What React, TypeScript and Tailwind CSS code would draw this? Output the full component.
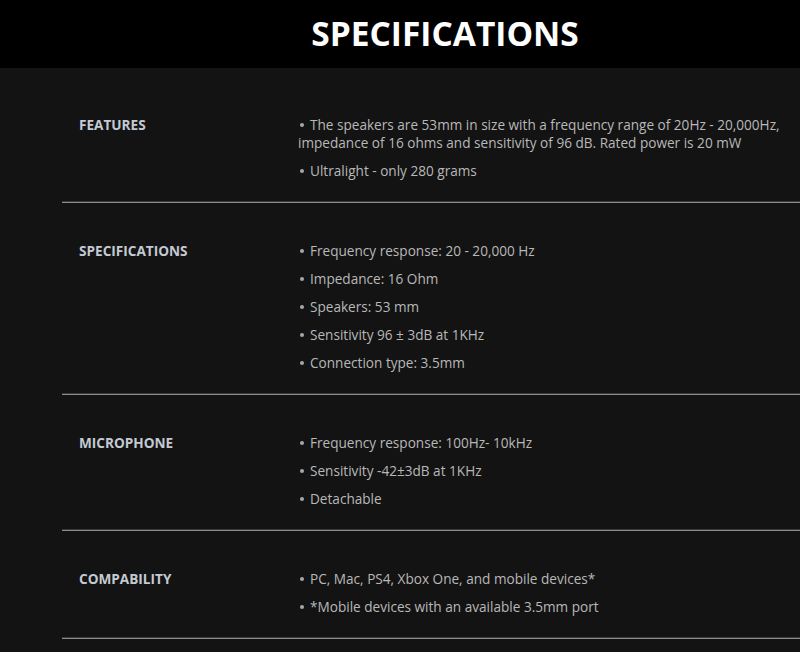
import React from 'react';

const specs: { label: string; items: string[] }[] = [
    {
        label: 'FEATURES',
        items: [
            'The speakers are 53mm in size with a frequency range of 20Hz - 20,000Hz, impedance of 16 ohms and sensitivity of 96 dB. Rated power is 20 mW',
            'Ultralight - only 280 grams',
        ],
    },
    {
        label: 'SPECIFICATIONS',
        items: [
            'Frequency response: 20 - 20,000 Hz',
            'Impedance: 16 Ohm',
            'Speakers: 53 mm',
            'Sensitivity 96 ± 3dB at 1KHz',
            'Connection type: 3.5mm',
        ],
    },
    {
        label: 'MICROPHONE',
        items: ['Frequency response: 100Hz- 10kHz', 'Sensitivity -42±3dB at 1KHz', 'Detachable'],
    },
    {
        label: 'COMPABILITY',
        items: ['PC, Mac, PS4, Xbox One, and mobile devices*', '*Mobile devices with an available 3.5mm port'],
    },
];

const App: React.FC = () => {
    return (
        <div className="min-h-screen bg-[#131313]" style={{ fontFamily: '"Open Sans", sans-serif' }}>
            {/* Header */}
            <div className="h-[68px] bg-black flex items-center justify-center">
                <h1 className="pl-[90px] text-[33.5px] font-bold text-white leading-none">
                    SPECIFICATIONS
                </h1>
            </div>

            <div className="ml-[62px] pt-[9px]">
                {specs.map((spec) => (
                    <div key={spec.label}>
                        <div className="flex pt-[39px] pb-[21px]">
                            <div className="w-[236px] pl-[17px] text-[13.6px] font-bold leading-[18px] text-[#c3cad2]">
                                {spec.label}
                            </div>
                            <ul className="flex-1 pr-[6px] space-y-[10px]">
                                {spec.items.map((item, i) => (
                                    <li key={i} className="text-[13.6px] leading-[18px] text-[#b8b8b8]">
                                        <span className="inline-block w-[4px] h-[4px] rounded-full bg-[#a8a8a8] align-middle ml-[2px] mr-[6px] relative -top-[1px]"></span>
                                        {item}
                                    </li>
                                ))}
                            </ul>
                        </div>
                        <div className="h-px bg-[#3a3a3a]"></div>
                        <div className="h-px bg-[#8c8c8c]"></div>
                    </div>
                ))}
            </div>
        </div>
    );
};

export default App;
